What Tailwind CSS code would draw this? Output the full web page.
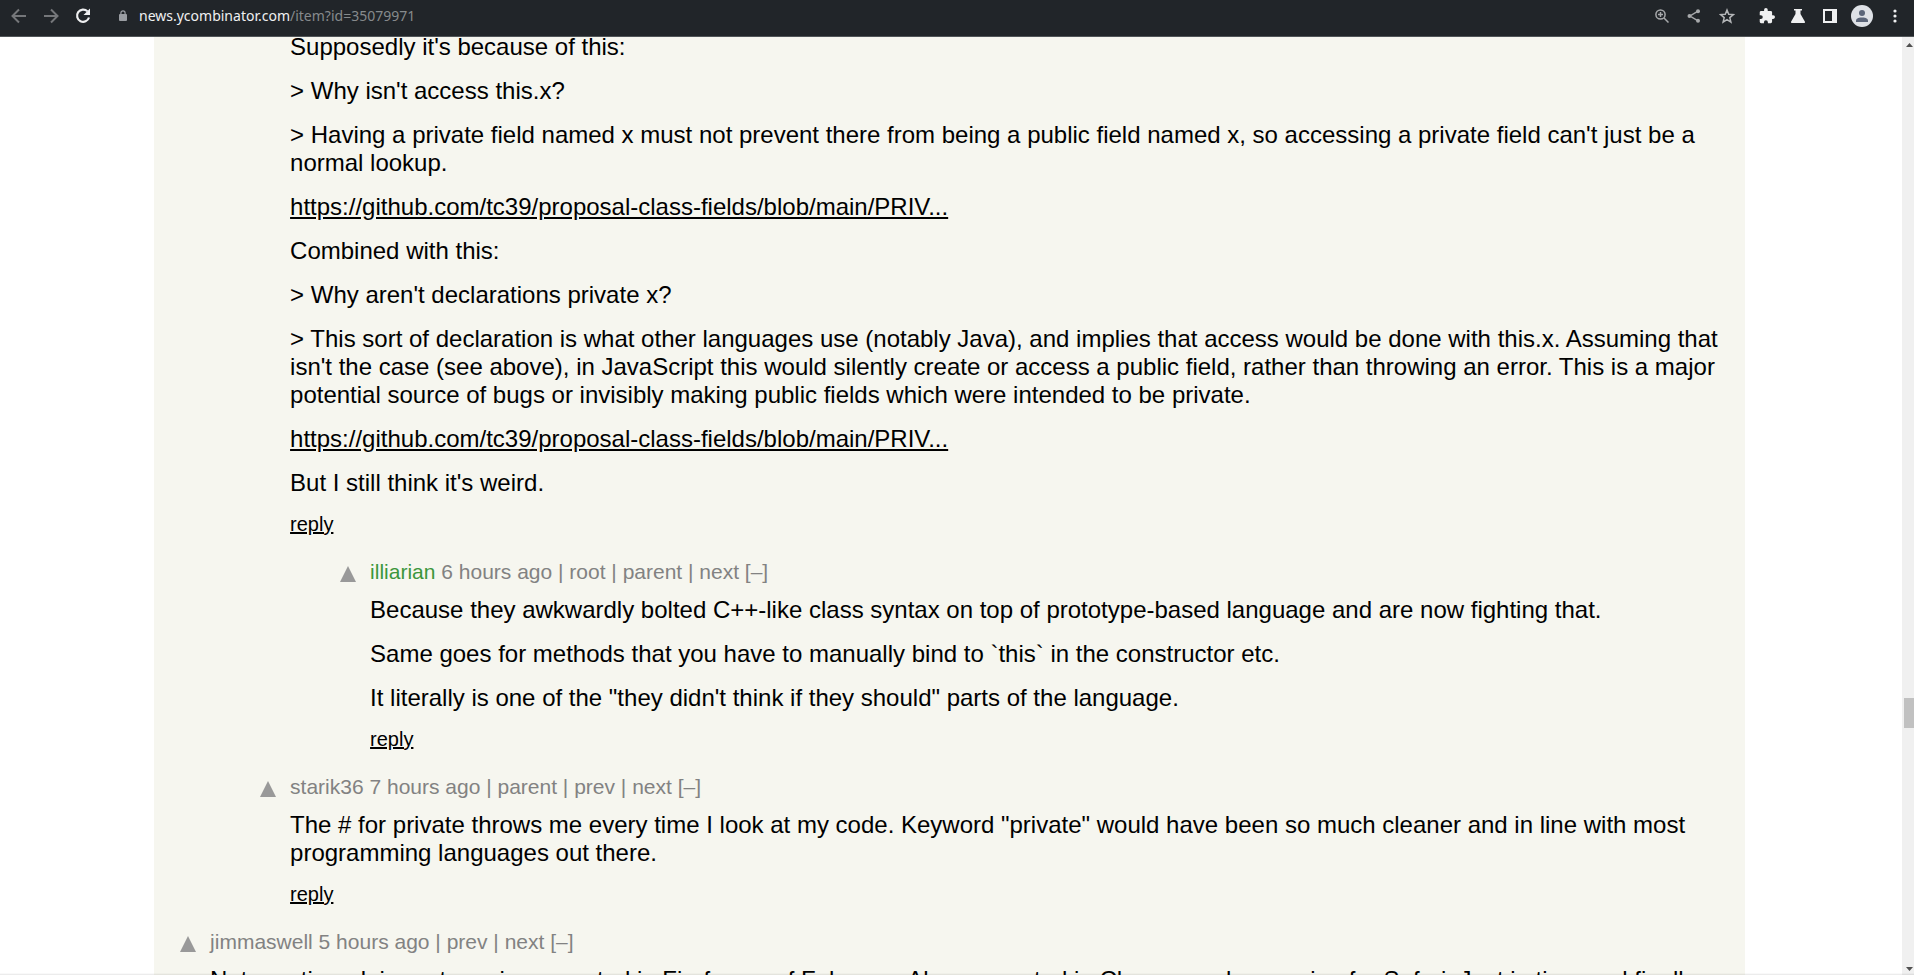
<!DOCTYPE html>
<html lang="en">
<head>
<meta charset="utf-8">
<title>Hacker News</title>
<script src="https://cdn.jsdelivr.net/npm/@tailwindcss/browser@4"></script>
</head>
<body class="relative flex h-screen flex-col overflow-hidden bg-white font-['Liberation_Sans',Arial,sans-serif] text-black">
  <header class="flex h-[37px] shrink-0 items-center justify-between border-b border-[#505558] bg-[#212529] pb-1 pl-2.5 pr-3">
    <div class="flex items-center">
      <button aria-label="Back" class="mr-3.5 text-[#75777a]"><svg class="size-[18px]" viewBox="0 0 18 18" fill="none" stroke="currentColor" stroke-width="2"><path d="M16 9H3M9 2.5 2.5 9 9 15.5"/></svg></button>
      <button aria-label="Forward" class="mr-3.5 text-[#75777a]"><svg class="size-[18px]" viewBox="0 0 18 18" fill="none" stroke="currentColor" stroke-width="2"><path d="M2 9h13M9 2.5 15.5 9 9 15.5"/></svg></button>
      <button aria-label="Reload" class="text-[#eff0f1]"><svg class="size-[18px]" viewBox="0 0 18 18"><path d="M13.4 4.3A6.1 6.1 0 1 0 15 10.5" fill="none" stroke="currentColor" stroke-width="2.2"/><path d="M16 1.5V8H9.5z" fill="currentColor"/></svg></button>
      <svg class="ml-[27px] h-[14px] w-2" viewBox="0 0 8 14"><path d="M1 5h6a1 1 0 0 1 1 1v5a1 1 0 0 1-1 1H1a1 1 0 0 1-1-1V6a1 1 0 0 1 1-1z" fill="#9a9da2"/><path d="M1.900 6V4a2.100 2.100 0 0 1 4.200 0v2" fill="none" stroke="#9a9da2" stroke-width="1.200"/></svg>
      <a href="#" class="ml-3 font-['Noto_Sans',sans-serif] text-[14px] leading-5 text-[#868a8c]"><span class="text-[#eff0f1]">news.ycombinator.com</span>/item?id=35079971</a>
    </div>
    <div class="flex items-center text-[#eff0f1]">
      <button aria-label="Zoom" class="mr-[18px] text-[#a7a9ab]"><svg class="size-[14px]" viewBox="0 0 14 14" fill="none" stroke="currentColor" stroke-width="1.5"><circle cx="5.5" cy="5.5" r="4.6"/><path d="m9 9 4.5 4.5M5.5 3v5M3 5.5h5"/></svg></button>
      <button aria-label="Share" class="mr-[18px] text-[#a7a9ab]"><svg class="size-[14px]" viewBox="0 0 14 14"><path d="M11 2.2 3 7l8 4.8" fill="none" stroke="currentColor" stroke-width="1.4"/><g fill="currentColor"><circle cx="11" cy="2.3" r="2"/><circle cx="2.5" cy="7" r="2"/><circle cx="11" cy="11.7" r="2"/></g></svg></button>
      <button aria-label="Bookmark" class="mr-6 text-[#b4b6b8]"><svg class="size-4" viewBox="0 0 16 16" fill="none" stroke="currentColor" stroke-width="1.5"><path d="m8 2 1.700 4.200 4.600.4-3.500 3 1.100 4.500L8 11.700l-3.900 2.400 1.100-4.500-3.500-3 4.600-.4z"/></svg></button>
      <button aria-label="Extensions" class="mr-4"><svg class="size-4" viewBox="1 1 22 22" fill="currentColor"><path d="M20.500 11H19V7a2 2 0 0 0-2-2h-4V3.500a2.500 2.500 0 0 0-5 0V5H4a2 2 0 0 0-2 2v3.800h1.500a2.700 2.700 0 0 1 0 5.400H2V20a2 2 0 0 0 2 2h3.800v-1.500a2.700 2.700 0 0 1 5.400 0V22H17a2 2 0 0 0 2-2v-4h1.500a2.500 2.500 0 0 0 0-5z"/></svg></button>
      <button aria-label="Labs" class="mr-[18px]"><svg class="size-[14px]" viewBox="0 0 14 14" fill="currentColor"><path d="M3 0h8v1.500H9.500V5l4.300 7.400A1 1 0 0 1 13 14H1a1 1 0 0 1-.8-1.600L4.500 5V1.500H3z"/></svg></button>
      <button aria-label="Side panel" class="mr-3.5"><svg class="size-[14px]" viewBox="0 0 14 14" fill="currentColor"><path fill-rule="evenodd" d="M0 0h14v14H0zM2 2v10h7V2z"/></svg></button>
      <button aria-label="Profile" class="mr-5"><svg class="size-[22px]" viewBox="0 0 22 22"><circle cx="11" cy="11" r="11" fill="#dee1e6"/><g fill="#5b6579"><circle cx="11" cy="8" r="3"/><path d="M5 17v-1.500C5 13 9 12.500 11 12.500s6 .5 6 3V17z"/></g></svg></button>
      <button aria-label="Menu" class="mr-[5px]"><svg class="h-[14px] w-1" viewBox="0 0 4 14" fill="currentColor"><circle cx="2" cy="2" r="1.600"/><circle cx="2" cy="7" r="1.600"/><circle cx="2" cy="12" r="1.600"/></svg></button>
    </div>
  </header>
  <div class="flex min-h-0 flex-1">
    <main class="min-w-0 flex-1 overflow-hidden pl-[8.05%] pr-[8.2%]">
      <div class="bg-[#f6f6ef] pl-5 pr-6">
        <article class="flex flex-col gap-4 pl-[116px] text-2xl leading-7 text-black">
          <p class="-mt-1">Supposedly it's because of this:</p>
          <p>&gt; Why isn't access this.x?</p>
          <p>&gt; Having a private field named x must not prevent there from being a public field named x, so accessing a private field can't just be a normal lookup.</p>
          <p><a href="#" class="underline">https://github.com/tc39/proposal-class-fields/blob/main/PRIV...</a></p>
          <p>Combined with this:</p>
          <p>&gt; Why aren't declarations private x?</p>
          <p>&gt; This sort of declaration is what other languages use (notably Java), and implies that access would be done with this.x. Assuming that isn't the case (see above), in JavaScript this would silently create or access a public field, rather than throwing an error. This is a major potential source of bugs or invisibly making public fields which were intended to be private.</p>
          <p><a href="#" class="underline">https://github.com/tc39/proposal-class-fields/blob/main/PRIV...</a></p>
          <p>But I still think it's weird.</p>
          <p class="text-xl leading-[22px]"><a href="#" class="underline">reply</a></p>
        </article>

        <article class="flex pl-[164px] pt-[25px]">
          <button aria-label="Upvote" class="mt-1.5 mr-3.5 self-start pl-0.5"><svg class="h-4 w-4" viewBox="0 0 16 16"><path d="M8 0 16 16H0z" fill="#999"/></svg></button>
          <div class="min-w-0 flex-1">
            <div class="text-[21px] leading-6 text-[#828282]"><a href="#" class="text-[#3c963c]">illiarian</a> <a href="#">6 hours ago</a> | <a href="#">root</a> | <a href="#">parent</a> | <a href="#">next</a> <a href="#">[–]</a></div>
            <div class="mt-3 flex flex-col gap-4 text-2xl leading-7">
              <p>Because they awkwardly bolted C++-like class syntax on top of prototype-based language and are now fighting that.</p>
              <p>Same goes for methods that you have to manually bind to `this` in the constructor etc.</p>
              <p>It literally is one of the "they didn't think if they should" parts of the language.</p>
              <p class="text-xl leading-[22px]"><a href="#" class="underline">reply</a></p>
            </div>
          </div>
        </article>

        <article class="flex pl-[84px] pt-[25px]">
          <button aria-label="Upvote" class="mt-1.5 mr-3.5 self-start pl-0.5"><svg class="h-4 w-4" viewBox="0 0 16 16"><path d="M8 0 16 16H0z" fill="#999"/></svg></button>
          <div class="min-w-0 flex-1">
            <div class="text-[21px] leading-6 text-[#828282]"><a href="#">starik36</a> <a href="#">7 hours ago</a> | <a href="#">parent</a> | <a href="#">prev</a> | <a href="#">next</a> <a href="#">[–]</a></div>
            <div class="mt-3 flex flex-col gap-4 text-2xl leading-7">
              <p>The # for private throws me every time I look at my code. Keyword "private" would have been so much cleaner and in line with most programming languages out there.</p>
              <p class="text-xl leading-[22px]"><a href="#" class="underline">reply</a></p>
            </div>
          </div>
        </article>

        <article class="flex pl-1 pt-[25px]">
          <button aria-label="Upvote" class="mt-1.5 mr-3.5 self-start pl-0.5"><svg class="h-4 w-4" viewBox="0 0 16 16"><path d="M8 0 16 16H0z" fill="#999"/></svg></button>
          <div class="min-w-0 flex-1">
            <div class="text-[21px] leading-6 text-[#828282]"><a href="#">jimmaswell</a> <a href="#">5 hours ago</a> | <a href="#">prev</a> | <a href="#">next</a> <a href="#">[–]</a></div>
            <p class="mt-3 text-2xl leading-7">Not mentioned: importmap is supported in Firefox as of February. Also supported in Chrome and upcoming for Safari. Just in time and finally</p>
          </div>
        </article>
      </div>
    </main>
    <div class="flex w-3 shrink-0 flex-col items-end bg-[#f0f0f0]" aria-hidden="true">
      <svg class="mt-1.5 mr-px h-1 w-[7px]" viewBox="0 0 7 4"><path d="M3.500 0 7 4H0z" fill="#505050"/></svg>
      <div class="grow-[652]"></div>
      <div class="h-[30px] w-2.5 bg-[#c1c1c1]"></div>
      <div class="grow-[239]"></div>
      <svg class="mb-1 mr-px h-1 w-[7px]" viewBox="0 0 7 4"><path d="M0 0h7L3.500 4z" fill="#505050"/></svg>
    </div>
  </div>
  <div class="pointer-events-none absolute inset-x-0 bottom-0 h-0.5 bg-linear-to-t from-black/10 to-transparent"></div>
</body>
</html>
